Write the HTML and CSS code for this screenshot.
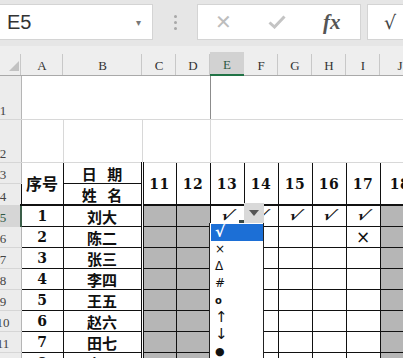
FILE: index.html
```html
<!DOCTYPE html>
<html lang="zh">
<head>
<meta charset="utf-8">
<link rel="stylesheet" href="styles.css">
</head>
<body>
<div class="toolbar">
  <div class="namebox"><span class="ref">E5</span><span class="nb-arrow">▾</span></div>
  <div class="grip"><span></span><span></span><span></span></div>
  <div class="fxbox">
    <span class="fx-x">✕</span>
    <svg class="fx-ok" width="18" height="14" viewBox="0 0 18 14"><path d="M1.5 7.5 L6.5 12 L16.5 1.5" fill="none" stroke="#c4c4c4" stroke-width="3"/></svg>
    <span class="fx-f">fx</span>
  </div>
  <div class="valbox">√</div>
</div>
<div class="sheet">
  <table class="grid">
    <colgroup>
      <col class="w-rh"><col class="w-a"><col class="w-b">
      <col class="w-d"><col class="w-d"><col class="w-d"><col class="w-d"><col class="w-d"><col class="w-d"><col class="w-d">
      <col class="w-j">
    </colgroup>
    <thead>
      <tr class="hdr">
        <th class="corner"><span class="tri"></span></th>
        <th>A</th><th>B</th><th>C</th><th>D</th><th class="act">E</th><th>F</th><th>G</th><th>H</th><th>I</th><th>J</th>
      </tr>
    </thead>
    <tbody>
      <tr class="r1">
        <th class="rh"><span>1</span></th>
        <td colspan="4" class="lite"></td>
        <td colspan="6" class="lite frz"></td>
      </tr>
      <tr class="r2">
        <th class="rh"><span>2</span></th>
        <td class="lite"></td><td class="lite"></td><td colspan="2" class="lite"></td>
        <td colspan="6" class="lite frz"></td>
      </tr>
      <tr class="r3">
        <th class="rh"><span>3</span></th>
        <td rowspan="2" class="cn big">序号</td>
        <td class="cn date">日 期</td>
        <td rowspan="2" class="day dbl">11</td><td rowspan="2" class="day">12</td><td rowspan="2" class="day">13</td>
        <td rowspan="2" class="day">14</td><td rowspan="2" class="day">15</td><td rowspan="2" class="day">16</td>
        <td rowspan="2" class="day">17</td><td rowspan="2" class="day">18</td>
      </tr>
      <tr class="r4">
        <th class="rh"><span>4</span></th>
        <td class="cn date">姓 名</td>
      </tr>
      <tr class="dr top">
        <th class="rh cur"><span>5</span></th>
        <td class="no">1</td><td class="cn">刘大</td>
        <td class="g dbl"></td><td class="g"></td>
        <td class="ck"><span>√</span></td><td class="ck"><span>√</span></td><td class="ck"><span>√</span></td><td class="ck"><span>√</span></td><td class="ck"><span>√</span></td>
        <td class="g"></td>
      </tr>
      <tr class="dr">
        <th class="rh"><span>6</span></th>
        <td class="no">2</td><td class="cn">陈二</td>
        <td class="g dbl"></td><td class="g"></td>
        <td></td><td></td><td></td><td></td><td class="cx">×</td>
        <td class="g"></td>
      </tr>
      <tr class="dr">
        <th class="rh"><span>7</span></th>
        <td class="no">3</td><td class="cn">张三</td>
        <td class="g dbl"></td><td class="g"></td>
        <td></td><td></td><td></td><td></td><td></td>
        <td class="g"></td>
      </tr>
      <tr class="dr">
        <th class="rh"><span>8</span></th>
        <td class="no">4</td><td class="cn">李四</td>
        <td class="g dbl"></td><td class="g"></td>
        <td></td><td></td><td></td><td></td><td></td>
        <td class="g"></td>
      </tr>
      <tr class="dr">
        <th class="rh"><span>9</span></th>
        <td class="no">5</td><td class="cn">王五</td>
        <td class="g dbl"></td><td class="g"></td>
        <td></td><td></td><td></td><td></td><td></td>
        <td class="g"></td>
      </tr>
      <tr class="dr">
        <th class="rh"><span>10</span></th>
        <td class="no">6</td><td class="cn">赵六</td>
        <td class="g dbl"></td><td class="g"></td>
        <td></td><td></td><td></td><td></td><td></td>
        <td class="g"></td>
      </tr>
      <tr class="dr">
        <th class="rh"><span>11</span></th>
        <td class="no">7</td><td class="cn">田七</td>
        <td class="g dbl"></td><td class="g"></td>
        <td></td><td></td><td></td><td></td><td></td>
        <td class="g"></td>
      </tr>
      <tr class="dr">
        <th class="rh"><span>12</span></th>
        <td class="no">8</td><td class="cn">高八</td>
        <td class="g dbl"></td><td class="g"></td>
        <td></td><td></td><td></td><td></td><td></td>
        <td class="g"></td>
      </tr>
    </tbody>
  </table>
  <span class="handle"></span>
  <span class="ddbtn"><span class="ddarr"></span></span>
  <ul class="ddlist">
    <li class="sel">√</li>
    <li>×</li>
    <li>Δ</li>
    <li>#</li>
    <li class="ring">o</li>
    <li class="arr">↑</li>
    <li class="arr">↓</li>
    <li class="dot">●</li>
  </ul>
</div>
</body>
</html>
```

FILE: styles.css
```css
html, body {
  margin: 0;
  padding: 0;
}
body {
  width: 403px;
  height: 358px;
  overflow: hidden;
  background: #ffffff;
  font-family: "Liberation Sans", Arial, sans-serif;
}

/* ---------- formula bar ---------- */
.toolbar {
  height: 46px;
  background: #e6e6e6;
  display: flex;
  align-items: flex-start;
  padding-top: 4px;
  box-sizing: border-box;
  overflow: hidden;
}
.toolbar > * {
  flex-shrink: 0;
}
.namebox {
  width: 153px;
  height: 36px;
  background: #fff;
  border: 1px solid #d4d4d4;
  border-left: none;
  box-sizing: border-box;
  display: flex;
  align-items: center;
  justify-content: space-between;
  padding: 0 11px 0 7px;
}
.ref {
  font-size: 20px;
  color: #333;
}
.nb-arrow {
  font-size: 10px;
  color: #777;
}
.grip {
  width: 44px;
  height: 36px;
  display: flex;
  flex-direction: column;
  align-items: center;
  justify-content: center;
  gap: 3px;
}
.grip span {
  width: 3px;
  height: 3px;
  background: #a8a8a8;
  border-radius: 50%;
}
.fxbox {
  width: 164px;
  height: 36px;
  background: #fff;
  border: 1px solid #d4d4d4;
  box-sizing: border-box;
  display: flex;
  align-items: center;
  padding: 0 0 0 17px;
}
.fx-x {
  font-size: 20px;
  color: #bdbdbd;
  width: 53px;
}
.fx-ok {
  margin-right: 37px;
}
.fx-f {
  font-family: "Liberation Serif", serif;
  font-style: italic;
  font-weight: bold;
  font-size: 21px;
  color: #555;
}
.valbox {
  margin-left: 6px;
  width: 60px;
  height: 36px;
  background: #fff;
  border: 1px solid #d4d4d4;
  border-right: none;
  box-sizing: border-box;
  font-family: "DejaVu Sans", sans-serif;
  font-size: 19px;
  color: #444;
  padding-left: 16px;
  line-height: 34px;
}

/* ---------- grid ---------- */
.sheet {
  position: relative;
}
.grid {
  border-collapse: collapse;
  table-layout: fixed;
  width: 420px;
}
.w-rh { width: 21px; }
.w-a { width: 42px; }
.w-b { width: 79px; }
.w-d { width: 34px; }
.w-j { width: 40px; }

.grid th, .grid td {
  padding: 0;
  overflow: hidden;
  white-space: nowrap;
}

.hdr th {
  height: 27px;
  background: #eeeeee linear-gradient(#c8c8c8, #c8c8c8) right bottom / 1px 21px no-repeat;
  border-bottom: 1px solid #a9a9a9;
  font-family: "Liberation Serif", serif;
  font-weight: normal;
  font-size: 13px;
  color: #333;
  vertical-align: bottom;
  padding-bottom: 1px;
}
.hdr th.act {
  background: #eeeeee linear-gradient(#d2d2d2, #d2d2d2) left bottom / 100% 22px no-repeat;
  border-bottom: 2px solid #217346;
  color: #2f5a44;
}
.corner {
  position: relative;
}
.tri {
  position: absolute;
  right: 2px;
  bottom: 4px;
  width: 0;
  height: 0;
  border-left: 10px solid transparent;
  border-bottom: 10px solid #c2c2c2;
}

.grid th.rh {
  background: #ececec;
  border-right: 1px solid #b5b5b5;
  border-bottom: 1px solid #d6d6d6;
  font-family: "Liberation Serif", serif;
  font-weight: normal;
  font-size: 13px;
  color: #444;
  vertical-align: bottom;
  overflow: visible;
}
.rh span {
  display: block;
  width: 36px;
  margin-left: -15px;
  text-align: center;
}
.grid th.rh.cur {
  background: #d6d6d6;
  border-right: 2px solid #3a5e48;
  color: #2f5a44;
}

.r1 td { height: 43px; }
.r2 td { height: 42px; }
.lite {
  border-right: 1px solid #d8d8d8;
  border-bottom: 1px solid #d8d8d8;
}
.r1 td.lite:first-of-type { border-right: none; }
.frz {
  border-left: 1px solid #8c8c8c;
}
.r1 th.rh { height: 43px; }

.r3 td, .r3 th, .r4 td, .r4 th { height: 20px; }
.r3 td, .r4 td {
  border: 1px solid #111;
}
.r4 td, .r3 td[rowspan] {
  border-bottom: 2px solid #111;
}
.cn {
  font-family: "Noto Sans CJK SC", sans-serif;
  font-weight: 700;
  font-size: 15px;
  color: #111;
  text-align: center;
  line-height: 19px;
}
.cn.big {
  font-size: 16px;
}
.date {
  font-size: 15px;
  word-spacing: 7px;
}
.day {
  font-family: "DejaVu Serif", serif;
  font-weight: bold;
  font-size: 14px;
  letter-spacing: 0.5px;
  color: #111;
  text-align: center;
}
.dbl {
  border-left: 3px double #111 !important;
}

.dr td, .dr th { height: 20px; }
.dr td {
  border: 1px solid #111;
  text-align: center;
}
.no {
  font-family: "DejaVu Serif", serif;
  font-weight: bold;
  font-size: 14px;
  color: #111;
}
.g {
  background: #b6b6b6;
}
.ck span {
  display: inline-block;
  font-family: "DejaVu Sans", sans-serif;
  font-weight: bold;
  font-size: 15px;
  line-height: 15px;
  color: #111;
  transform: skewX(-28deg) scale(1.15, 0.85);
}
.cx {
  font-family: "DejaVu Sans", sans-serif;
  font-size: 17px;
  color: #111;
}

/* ---------- overlays ---------- */
.handle {
  position: absolute;
  left: 239px;
  top: 174px;
  width: 5px;
  height: 5px;
  background: #3b4a44;
}
.ddbtn {
  position: absolute;
  left: 244px;
  top: 157px;
  width: 20px;
  height: 20px;
  background: #d9d9d9;
  display: flex;
  align-items: center;
  justify-content: center;
}
.ddarr {
  width: 0;
  height: 0;
  border-left: 5px solid transparent;
  border-right: 5px solid transparent;
  border-top: 6px solid #555;
}
.ddlist {
  position: absolute;
  left: 209px;
  top: 177px;
  width: 55px;
  height: 200px;
  margin: 0;
  padding: 1px 0 0 1px;
  box-sizing: border-box;
  list-style: none;
  background: #fff;
  border-right: 1px solid #222;
  border-left: 1px solid #222;
  font-family: "DejaVu Sans", sans-serif;
  font-size: 12px;
  color: #111;
}
.ddlist li {
  height: 17px;
  line-height: 17px;
  padding-left: 4px;
}
.ddlist li.sel {
  background: #1c6fd6;
  color: #fff;
  font-size: 15px;
  font-weight: bold;
}
.ddlist li.ring {
  font-weight: bold;
  font-size: 10px;
}
.ddlist li.arr {
  font-size: 15px;
}
.ddlist li.dot {
  font-size: 11px;
}
```
